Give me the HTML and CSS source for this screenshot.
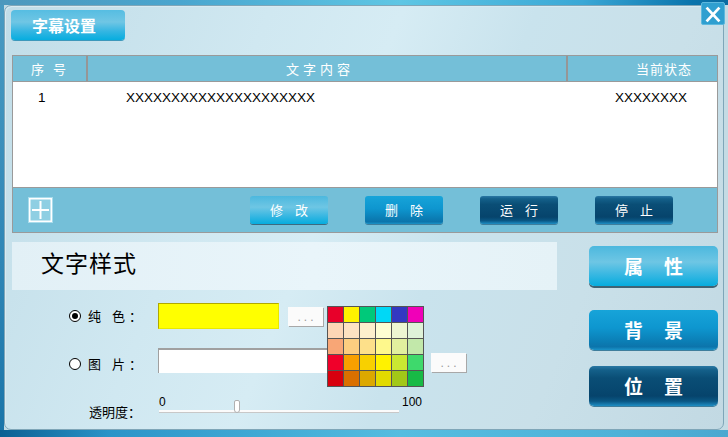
FILE: index.html
```html
<!DOCTYPE html>
<html lang="zh">
<head>
<meta charset="utf-8">
<title>字幕设置</title>
<link rel="stylesheet" href="styles.css">
</head>
<body>
<div class="window">
  <div class="panel">
    <div class="titlebar"><div class="title-btn">字幕设置</div></div>

    <div class="table">
      <div class="thead">
        <div class="c1">序&nbsp;号</div>
        <div class="c2">文字内容</div>
        <div class="c3">当前状态</div>
      </div>
      <div class="tbody">
        <div class="trow">
          <div class="d1">1</div>
          <div class="d2">XXXXXXXXXXXXXXXXXXXXX</div>
          <div class="d3">XXXXXXXX</div>
        </div>
      </div>
      <div class="toolbar">
        <div class="plus">
          <svg width="25" height="26" viewBox="0 0 25 26">
            <rect x="1.5" y="1.5" width="22" height="23" fill="#8fcfe3" stroke="#ffffff" stroke-width="2"/>
            <rect x="0.5" y="0.5" width="24" height="25" fill="none" stroke="#a9dcec" stroke-width="1"/>
            <line x1="12.5" y1="4" x2="12.5" y2="22" stroke="#ffffff" stroke-width="2"/>
            <line x1="4" y1="13" x2="21" y2="13" stroke="#ffffff" stroke-width="2"/>
          </svg>
        </div>
        <div class="tbtn light first">修改</div>
        <div class="tbtn mid">删除</div>
        <div class="tbtn dark">运行</div>
        <div class="tbtn dark">停止</div>
      </div>
    </div>

    <div class="lower">
      <div class="left">
        <div class="stylebar">文字样式</div>
        <div class="form">
          <div class="row row1">
            <span class="radio checked"></span>
            <span class="label">纯&nbsp;色：</span>
            <span class="input yellow"></span>
            <span class="dots">...</span>
          </div>
          <div class="row row2">
            <span class="radio"></span>
            <span class="label">图&nbsp;片：</span>
            <span class="input white"></span>
            <span class="dots">...</span>
          </div>
          <div class="row row3">
            <span class="label alpha">透明度：</span>
            <div class="slider">
              <div class="scale"><span>0</span><span>100</span></div>
              <div class="track"><span class="thumb"></span></div>
            </div>
          </div>

          <div class="palette">
            <span style="background:#e8002a"></span><span style="background:#fff200"></span><span style="background:#00c97a"></span><span style="background:#00d8f6"></span><span style="background:#3338c2"></span><span style="background:#f000b8"></span>
            <span style="background:#fdd6b6"></span><span style="background:#fde2c2"></span><span style="background:#fef0cc"></span><span style="background:#fefed2"></span><span style="background:#eef6d2"></span><span style="background:#dff2d8"></span>
            <span style="background:#f8a676"></span><span style="background:#fcce80"></span><span style="background:#fde08a"></span><span style="background:#fef88c"></span><span style="background:#e2f09e"></span><span style="background:#c2e8aa"></span>
            <span style="background:#f0002a"></span><span style="background:#f8a000"></span><span style="background:#f8d000"></span><span style="background:#fff200"></span><span style="background:#cae832"></span><span style="background:#3ed96c"></span>
            <span style="background:#d8000e"></span><span style="background:#da7000"></span><span style="background:#dca800"></span><span style="background:#e2da00"></span><span style="background:#a2c818"></span><span style="background:#18ba46"></span>
          </div>
        </div>
      </div>
      <div class="right">
        <div class="rbtn light b1">属性</div>
        <div class="rbtn mid b2">背景</div>
        <div class="rbtn dark b3">位置</div>
      </div>
    </div>
  </div>

  <div class="close">
    <svg width="24" height="23" viewBox="0 0 24 23">
      <line x1="5" y1="4" x2="19" y2="19" stroke="#ffffff" stroke-width="3"/>
      <line x1="19" y1="4" x2="5" y2="19" stroke="#ffffff" stroke-width="3"/>
    </svg>
  </div>
</div>
</body>
</html>
```

FILE: styles.css
```css
* { box-sizing: border-box; }

html, body {
  margin: 0;
  padding: 0;
}

body {
  width: 728px;
  height: 437px;
  overflow: hidden;
  font-family: "Noto Sans CJK SC", "Liberation Sans", sans-serif;
  font-size: 13px;
  color: #000;
}

.window {
  position: relative;
  width: 728px;
  height: 437px;
  padding: 5px 4px 7px 4px;
  background:
    linear-gradient(to right, #4d98bd 0%, #4aa6cf 25%, #5ec6e4 55%, #3aa8d6 80%, #0a74ac 95%, #0a6aa0 100%) top / 100% 5px no-repeat,
    linear-gradient(to right, #0b5f92 0%, #2a94c8 15%, #55bde0 55%, #4eb2d8 85%, #4aa8d0 100%) bottom / 100% 7px no-repeat,
    linear-gradient(#4a9bc2, #2f86b6 60%, #1a74a8) left / 4px 100% no-repeat,
    #c4dbe4;
}

.panel {
  height: 425px;
  border: 1px solid #7fa6b8;
  border-radius: 7px;
  padding: 4px 5px 0 7px;
  background: linear-gradient(112deg, #c1dde8 0%, #d0e8f1 30%, #d6ecf4 45%, #c9e3ed 60%, #c9e0e9 78%, #c2d9e3 100%);
  box-shadow: inset 1px 1px 0 #d9eaf1;
}

/* title */
.titlebar {
  display: flex;
}

.title-btn {
  margin-left: -1px;
  width: 114px;
  height: 30px;
  border-radius: 4px;
  padding-left: 21px;
  line-height: 30px;
  font-size: 16px;
  font-weight: 700;
  color: #fff;
  background: linear-gradient(#56bde2 0%, #70c6e4 40%, #36b6e2 70%, #06addf 100%);
  box-shadow: 0 1px 0 #3d98bb;
}

/* table */
.table {
  margin-top: 15px;
  width: 706px;
  border: 1px solid #9a9a9a;
  display: flex;
  flex-direction: column;
}

.thead {
  display: flex;
  height: 26px;
  background: #74bfd8;
  border-bottom: 1px solid #9a9a9a;
  color: #fff;
  font-size: 13px;
  line-height: 25px;
}

.thead .c1 {
  width: 75px;
  border-right: 2px solid #969696;
  text-align: center;
  letter-spacing: 3px;
  padding-left: 1px;
}

.thead .c2 {
  width: 480px;
  border-right: 2px solid #969696;
  text-align: center;
  letter-spacing: 4px;
  padding-right: 14px;
}

.thead .c3 {
  flex: 1;
  text-align: right;
  padding-right: 25px;
  letter-spacing: 1px;
}

.tbody {
  height: 105px;
  background: #fff;
}

.trow {
  display: flex;
  height: 30px;
  align-items: center;
  font-family: "Liberation Sans", sans-serif;
  font-size: 13.5px;
  color: #000;
}

.d1 { width: 75px; padding-left: 25px; }
.d2 { width: 480px; padding-left: 38px; }
.d3 { flex: 1; padding-left: 47px; }

.toolbar {
  height: 45px;
  border-top: 1px solid #9a9a9a;
  background: #74bfd8;
  display: flex;
  align-items: center;
  gap: 37px;
  padding-left: 15px;
}

.plus {
  width: 25px;
  height: 26px;
  display: flex;
}

.tbtn {
  width: 78px;
  height: 28px;
  border-radius: 3px;
  color: #fff;
  font-size: 13px;
  line-height: 28px;
  text-align: center;
  letter-spacing: 12px;
  text-indent: 12px;
}

.tbtn.first { margin-left: 160px; }

.light {
  background: linear-gradient(#4cb8de 0%, #6ec6e4 40%, #3ab8e2 70%, #06acde 100%);
  box-shadow: 0 1px 0 #3d6a80;
}

.mid {
  background: linear-gradient(#17a4d9 0%, #0e96cf 45%, #0b7db4 80%, #0c74ab 92%, #1a93c8 100%);
  box-shadow: 0 1px 0 #3f7e9c;
}

.dark {
  background: linear-gradient(#2a78a4 0%, #14608a 10%, #0a4e76 30%, #06446c 75%, #0a5784 88%, #1e8ec4 100%);
  box-shadow: 0 1px 0 #3f7e9c;
}

/* lower section */
.lower {
  margin-top: 9px;
  display: flex;
  gap: 32px;
}

.left {
  width: 545px;
  display: flex;
  flex-direction: column;
}

.stylebar {
  height: 48px;
  background: linear-gradient(to right, #e2f0f6 0%, #e9f5fa 55%, #e5f2f7 100%);
  font-size: 23px;
  line-height: 40px;
  padding-left: 29px;
  letter-spacing: 1px;
}

.form {
  position: relative;
  padding-top: 13px;
  display: flex;
  flex-direction: column;
}

.row {
  display: flex;
  align-items: center;
  padding-left: 57px;
}

.row1 { height: 26px; }
.row2 { height: 32px; margin-top: 19px; align-items: flex-start; }
.row3 { height: 24px; margin-top: 16px; align-items: flex-start; }

.radio {
  width: 12px;
  height: 12px;
  border: 1px solid #000;
  border-radius: 50%;
  background: #fff;
  display: flex;
  align-items: center;
  justify-content: center;
}

.radio.checked::after {
  content: "";
  width: 6px;
  height: 6px;
  border-radius: 50%;
  background: #000;
}

.label {
  width: 77px;
  padding-left: 7px;
  font-size: 13px;
  line-height: 16px;
  letter-spacing: 4px;
}

.row2 .radio { margin-top: 10px; }
.row2 .label { margin-top: 8px; }

.label.alpha {
  width: 90px;
  padding-left: 20px;
  letter-spacing: 0;
  margin-top: 8px;
}

.input {
  display: block;
}

.input.yellow {
  width: 121px;
  height: 26px;
  background: #ffff00;
  border-top: 1px solid #b0a800;
  border-left: 1px solid #b0a800;
  border-right: 1px solid #e8e800;
  border-bottom: 1px solid #e8e800;
}

.input.white {
  width: 265px;
  height: 25px;
  background: #fff;
  border-top: 2px solid #a0a0a0;
  border-left: 1px solid #a0a0a0;
}

.dots {
  width: 35px;
  height: 19px;
  background: #fbfbfb;
  box-shadow: 1px 1px 0 #a8a8a8;
  color: #9a9a9a;
  font-family: "Liberation Sans", sans-serif;
  font-size: 12px;
  line-height: 20px;
  text-align: center;
  letter-spacing: 3px;
  text-indent: 3px;
}

.row1 .dots { margin-left: 9px; }
.row2 .dots { margin-left: 8px; margin-top: 5px; }

.slider {
  width: 264px;
  display: flex;
  flex-direction: column;
}

.scale {
  display: flex;
  justify-content: space-between;
  width: 263px;
  height: 13px;
  font-family: "Liberation Sans", sans-serif;
  font-size: 12px;
  line-height: 12px;
}

.track {
  position: relative;
  margin-top: 1px;
  width: 240px;
  height: 3px;
  background: #fbfbfb;
  border-bottom: 1px solid #c8c8c8;
}

.thumb {
  position: absolute;
  left: 75px;
  top: -10px;
  width: 6px;
  height: 13px;
  background: #fff;
  border: 1px solid #b0b0b0;
  border-radius: 2px 2px 3px 3px;
}

.palette {
  position: absolute;
  left: 315px;
  top: 16px;
  display: grid;
  grid-template-columns: repeat(6, 15px);
  grid-template-rows: repeat(5, 15px);
  gap: 1px;
  padding: 1px;
  background: #555;
}

.palette span { display: block; }

/* right buttons */
.right {
  width: 129px;
  display: flex;
  flex-direction: column;
  padding-top: 4px;
}

.rbtn {
  height: 40px;
  border-radius: 5px;
  color: #fff;
  font-size: 19px;
  font-weight: 700;
  line-height: 40px;
  text-align: center;
  letter-spacing: 21px;
  text-indent: 21px;
}

.rbtn.light { box-shadow: 0 2px 0 #3f6374; }
.b2 { margin-top: 24px; }
.b3 { margin-top: 16px; }

/* close */
.close {
  position: absolute;
  left: 701px;
  top: 2px;
  width: 24px;
  height: 23px;
  background: #2f9fd0;
  border: 1px solid #5db8de;
  border-radius: 2px;
  display: flex;
}
```
